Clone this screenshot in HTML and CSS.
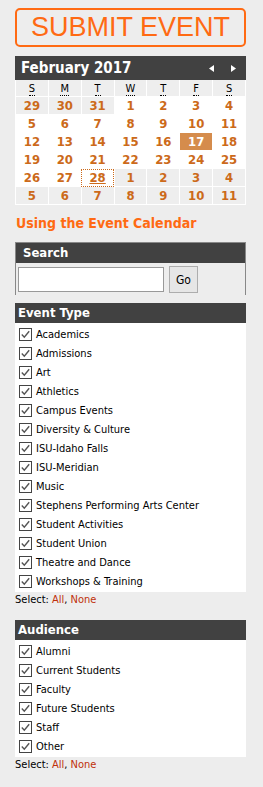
FILE: index.html
```html
<!DOCTYPE html>
<html>
<head>
<meta charset="utf-8">
<link rel="stylesheet" href="styles.css">
</head>
<body>
<div class="side">
  <a class="submit" href="#">SUBMIT EVENT</a>

  <div class="cal">
    <div class="cal-head">
      <span class="cal-title">February 2017</span>
      <span class="cal-nav">
        <svg width="6" height="7" viewBox="0 0 6 7"><path d="M5 0L0 3.5L5 7Z" fill="#fff"/></svg>
        <svg width="6" height="7" viewBox="0 0 6 7"><path d="M1 0L6 3.5L1 7Z" fill="#fff"/></svg>
      </span>
    </div>
    <table class="cal-grid">
      <thead>
        <tr><th><abbr>S</abbr></th><th><abbr>M</abbr></th><th><abbr>T</abbr></th><th><abbr>W</abbr></th><th><abbr>T</abbr></th><th><abbr>F</abbr></th><th><abbr>S</abbr></th></tr>
      </thead>
      <tbody>
        <tr><td class="o">29</td><td class="o">30</td><td class="o">31</td><td>1</td><td>2</td><td>3</td><td>4</td></tr>
        <tr><td>5</td><td>6</td><td>7</td><td>8</td><td>9</td><td>10</td><td>11</td></tr>
        <tr><td>12</td><td>13</td><td>14</td><td>15</td><td>16</td><td class="sel">17</td><td>18</td></tr>
        <tr><td>19</td><td>20</td><td>21</td><td>22</td><td>23</td><td>24</td><td>25</td></tr>
        <tr><td>26</td><td>27</td><td class="today"><span>28</span></td><td class="o">1</td><td class="o">2</td><td class="o">3</td><td class="o">4</td></tr>
        <tr><td class="o">5</td><td class="o">6</td><td class="o">7</td><td class="o">8</td><td class="o">9</td><td class="o">10</td><td class="o">11</td></tr>
      </tbody>
    </table>
  </div>

  <a class="using" href="#">Using the Event Calendar</a>

  <div class="search">
    <div class="panel-head search-head">Search</div>
    <div class="search-body">
      <input class="search-input" type="text">
      <button class="go">Go</button>
    </div>
  </div>

  <div class="filter">
    <div class="panel-head">Event Type</div>
    <ul class="list">
      <li><span class="cb"><svg width="11" height="11" viewBox="0 0 11 11"><path d="M1.8 5.5L4.3 8.2L9.2 2.3" fill="none" stroke="#555" stroke-width="1.4"/></svg></span>Academics</li>
      <li><span class="cb"><svg width="11" height="11" viewBox="0 0 11 11"><path d="M1.8 5.5L4.3 8.2L9.2 2.3" fill="none" stroke="#555" stroke-width="1.4"/></svg></span>Admissions</li>
      <li><span class="cb"><svg width="11" height="11" viewBox="0 0 11 11"><path d="M1.8 5.5L4.3 8.2L9.2 2.3" fill="none" stroke="#555" stroke-width="1.4"/></svg></span>Art</li>
      <li><span class="cb"><svg width="11" height="11" viewBox="0 0 11 11"><path d="M1.8 5.5L4.3 8.2L9.2 2.3" fill="none" stroke="#555" stroke-width="1.4"/></svg></span>Athletics</li>
      <li><span class="cb"><svg width="11" height="11" viewBox="0 0 11 11"><path d="M1.8 5.5L4.3 8.2L9.2 2.3" fill="none" stroke="#555" stroke-width="1.4"/></svg></span>Campus Events</li>
      <li><span class="cb"><svg width="11" height="11" viewBox="0 0 11 11"><path d="M1.8 5.5L4.3 8.2L9.2 2.3" fill="none" stroke="#555" stroke-width="1.4"/></svg></span>Diversity &amp; Culture</li>
      <li><span class="cb"><svg width="11" height="11" viewBox="0 0 11 11"><path d="M1.8 5.5L4.3 8.2L9.2 2.3" fill="none" stroke="#555" stroke-width="1.4"/></svg></span>ISU-Idaho Falls</li>
      <li><span class="cb"><svg width="11" height="11" viewBox="0 0 11 11"><path d="M1.8 5.5L4.3 8.2L9.2 2.3" fill="none" stroke="#555" stroke-width="1.4"/></svg></span>ISU-Meridian</li>
      <li><span class="cb"><svg width="11" height="11" viewBox="0 0 11 11"><path d="M1.8 5.5L4.3 8.2L9.2 2.3" fill="none" stroke="#555" stroke-width="1.4"/></svg></span>Music</li>
      <li><span class="cb"><svg width="11" height="11" viewBox="0 0 11 11"><path d="M1.8 5.5L4.3 8.2L9.2 2.3" fill="none" stroke="#555" stroke-width="1.4"/></svg></span>Stephens Performing Arts Center</li>
      <li><span class="cb"><svg width="11" height="11" viewBox="0 0 11 11"><path d="M1.8 5.5L4.3 8.2L9.2 2.3" fill="none" stroke="#555" stroke-width="1.4"/></svg></span>Student Activities</li>
      <li><span class="cb"><svg width="11" height="11" viewBox="0 0 11 11"><path d="M1.8 5.5L4.3 8.2L9.2 2.3" fill="none" stroke="#555" stroke-width="1.4"/></svg></span>Student Union</li>
      <li><span class="cb"><svg width="11" height="11" viewBox="0 0 11 11"><path d="M1.8 5.5L4.3 8.2L9.2 2.3" fill="none" stroke="#555" stroke-width="1.4"/></svg></span>Theatre and Dance</li>
      <li><span class="cb"><svg width="11" height="11" viewBox="0 0 11 11"><path d="M1.8 5.5L4.3 8.2L9.2 2.3" fill="none" stroke="#555" stroke-width="1.4"/></svg></span>Workshops &amp; Training</li>
    </ul>
    <div class="select">Select: <a href="#">All</a>, <a href="#">None</a></div>
  </div>

  <div class="filter audience">
    <div class="panel-head">Audience</div>
    <ul class="list">
      <li><span class="cb"><svg width="11" height="11" viewBox="0 0 11 11"><path d="M1.8 5.5L4.3 8.2L9.2 2.3" fill="none" stroke="#555" stroke-width="1.4"/></svg></span>Alumni</li>
      <li><span class="cb"><svg width="11" height="11" viewBox="0 0 11 11"><path d="M1.8 5.5L4.3 8.2L9.2 2.3" fill="none" stroke="#555" stroke-width="1.4"/></svg></span>Current Students</li>
      <li><span class="cb"><svg width="11" height="11" viewBox="0 0 11 11"><path d="M1.8 5.5L4.3 8.2L9.2 2.3" fill="none" stroke="#555" stroke-width="1.4"/></svg></span>Faculty</li>
      <li><span class="cb"><svg width="11" height="11" viewBox="0 0 11 11"><path d="M1.8 5.5L4.3 8.2L9.2 2.3" fill="none" stroke="#555" stroke-width="1.4"/></svg></span>Future Students</li>
      <li><span class="cb"><svg width="11" height="11" viewBox="0 0 11 11"><path d="M1.8 5.5L4.3 8.2L9.2 2.3" fill="none" stroke="#555" stroke-width="1.4"/></svg></span>Staff</li>
      <li><span class="cb"><svg width="11" height="11" viewBox="0 0 11 11"><path d="M1.8 5.5L4.3 8.2L9.2 2.3" fill="none" stroke="#555" stroke-width="1.4"/></svg></span>Other</li>
    </ul>
    <div class="select">Select: <a href="#">All</a>, <a href="#">None</a></div>
  </div>
</div>
</body>
</html>
```
FILE: styles.css
```css
html, body {
  margin: 0;
  padding: 0;
  background: #ededed;
}
body {
  font-family: "DejaVu Sans Condensed", "DejaVu Sans", sans-serif;
  font-size: 11px;
  color: #000;
}
.side {
  width: 231px;
  padding: 8px 0 0 15px;
}
.submit {
  display: block;
  box-sizing: border-box;
  width: 231px;
  height: 39px;
  border: 2px solid #ff6a13;
  border-radius: 5px;
  color: #ff6a13;
  text-decoration: none;
  text-align: center;
  font-family: "Liberation Sans", Arial, sans-serif;
  font-size: 27px;
  line-height: 35px;
}
.cal {
  margin-top: 9px;
}
.cal-head {
  display: flex;
  justify-content: space-between;
  align-items: center;
  height: 24px;
  background: #414141;
  padding: 0 10px 0 6px;
}
.cal-title {
  color: #fff;
  font-weight: bold;
  font-size: 15px;
}
.cal-nav {
  display: flex;
  gap: 15px;
  align-items: center;
}
.cal-nav svg { display: block; }
.cal-grid {
  width: 231px;
  border-collapse: collapse;
  table-layout: fixed;
  background: #fff;
}
.cal-grid th {
  height: 16px;
  background: #eeeeee;
  font-weight: normal;
  font-size: 11px;
  padding: 0;
  border: 1px solid #fff;
  border-top: 0;
}
.cal-grid abbr {
  text-decoration: none;
  border-bottom: 1px dotted #000;
}
.cal-grid td {
  height: 17px;
  padding: 0;
  text-align: center;
  border: 1px solid #fff;
  color: #cc6a1a;
  font-weight: bold;
  font-size: 13px;
}
.cal-grid td.o {
  background: #eeeeee;
}
.cal-grid td.sel {
  background: #d58c4c;
  color: #fff;
}
.cal-grid td.today {
  outline: 1px dotted #cc6a1a;
  outline-offset: -1px;
}
.cal-grid td.today span {
  text-decoration: underline;
}
.using {
  display: block;
  margin-top: 10px;
  color: #ff6a13;
  font-weight: bold;
  font-size: 14px;
  text-decoration: none;
  padding-left: 1px;
}
.search {
  margin-top: 11px;
  border: 1px solid #888;
  border-bottom: 0;
  height: 53px;
  box-sizing: border-box;
}
.panel-head {
  background: #414141;
  color: #fff;
  font-weight: bold;
  font-size: 13px;
  height: 20px;
  line-height: 20px;
  padding-left: 3px;
}
.search-head {
  padding-left: 7px;
}
.search-body {
  display: flex;
  align-items: center;
  gap: 5px;
  padding: 3px 0 0 2px;
}
.search-input {
  box-sizing: border-box;
  width: 146px;
  height: 25px;
  border: 1px solid #999;
  background: #fff;
  margin: 0;
}
.go {
  box-sizing: border-box;
  width: 29px;
  height: 27px;
  background: #e6e6e6;
  border: 1px solid #adadad;
  font-family: "DejaVu Sans Condensed", "DejaVu Sans", sans-serif;
  font-size: 12px;
  color: #000;
  padding: 0;
  margin: 0;
}
.filter {
  margin-top: 8px;
}
.list {
  list-style: none;
  margin: 0;
  padding: 2px 0 1px;
  background: #fff;
}
.list li {
  display: flex;
  align-items: center;
  height: 19px;
  padding-left: 4px;
}
.cb {
  box-sizing: border-box;
  width: 13px;
  height: 13px;
  border: 1px solid #444;
  background: #fff;
  margin-right: 4px;
  display: flex;
}
.cb svg { display: block; }
.select {
  height: 16px;
  line-height: 16px;
}
.select a {
  color: #c0300a;
  text-decoration: none;
}
.audience {
  margin-top: 12px;
}
```
